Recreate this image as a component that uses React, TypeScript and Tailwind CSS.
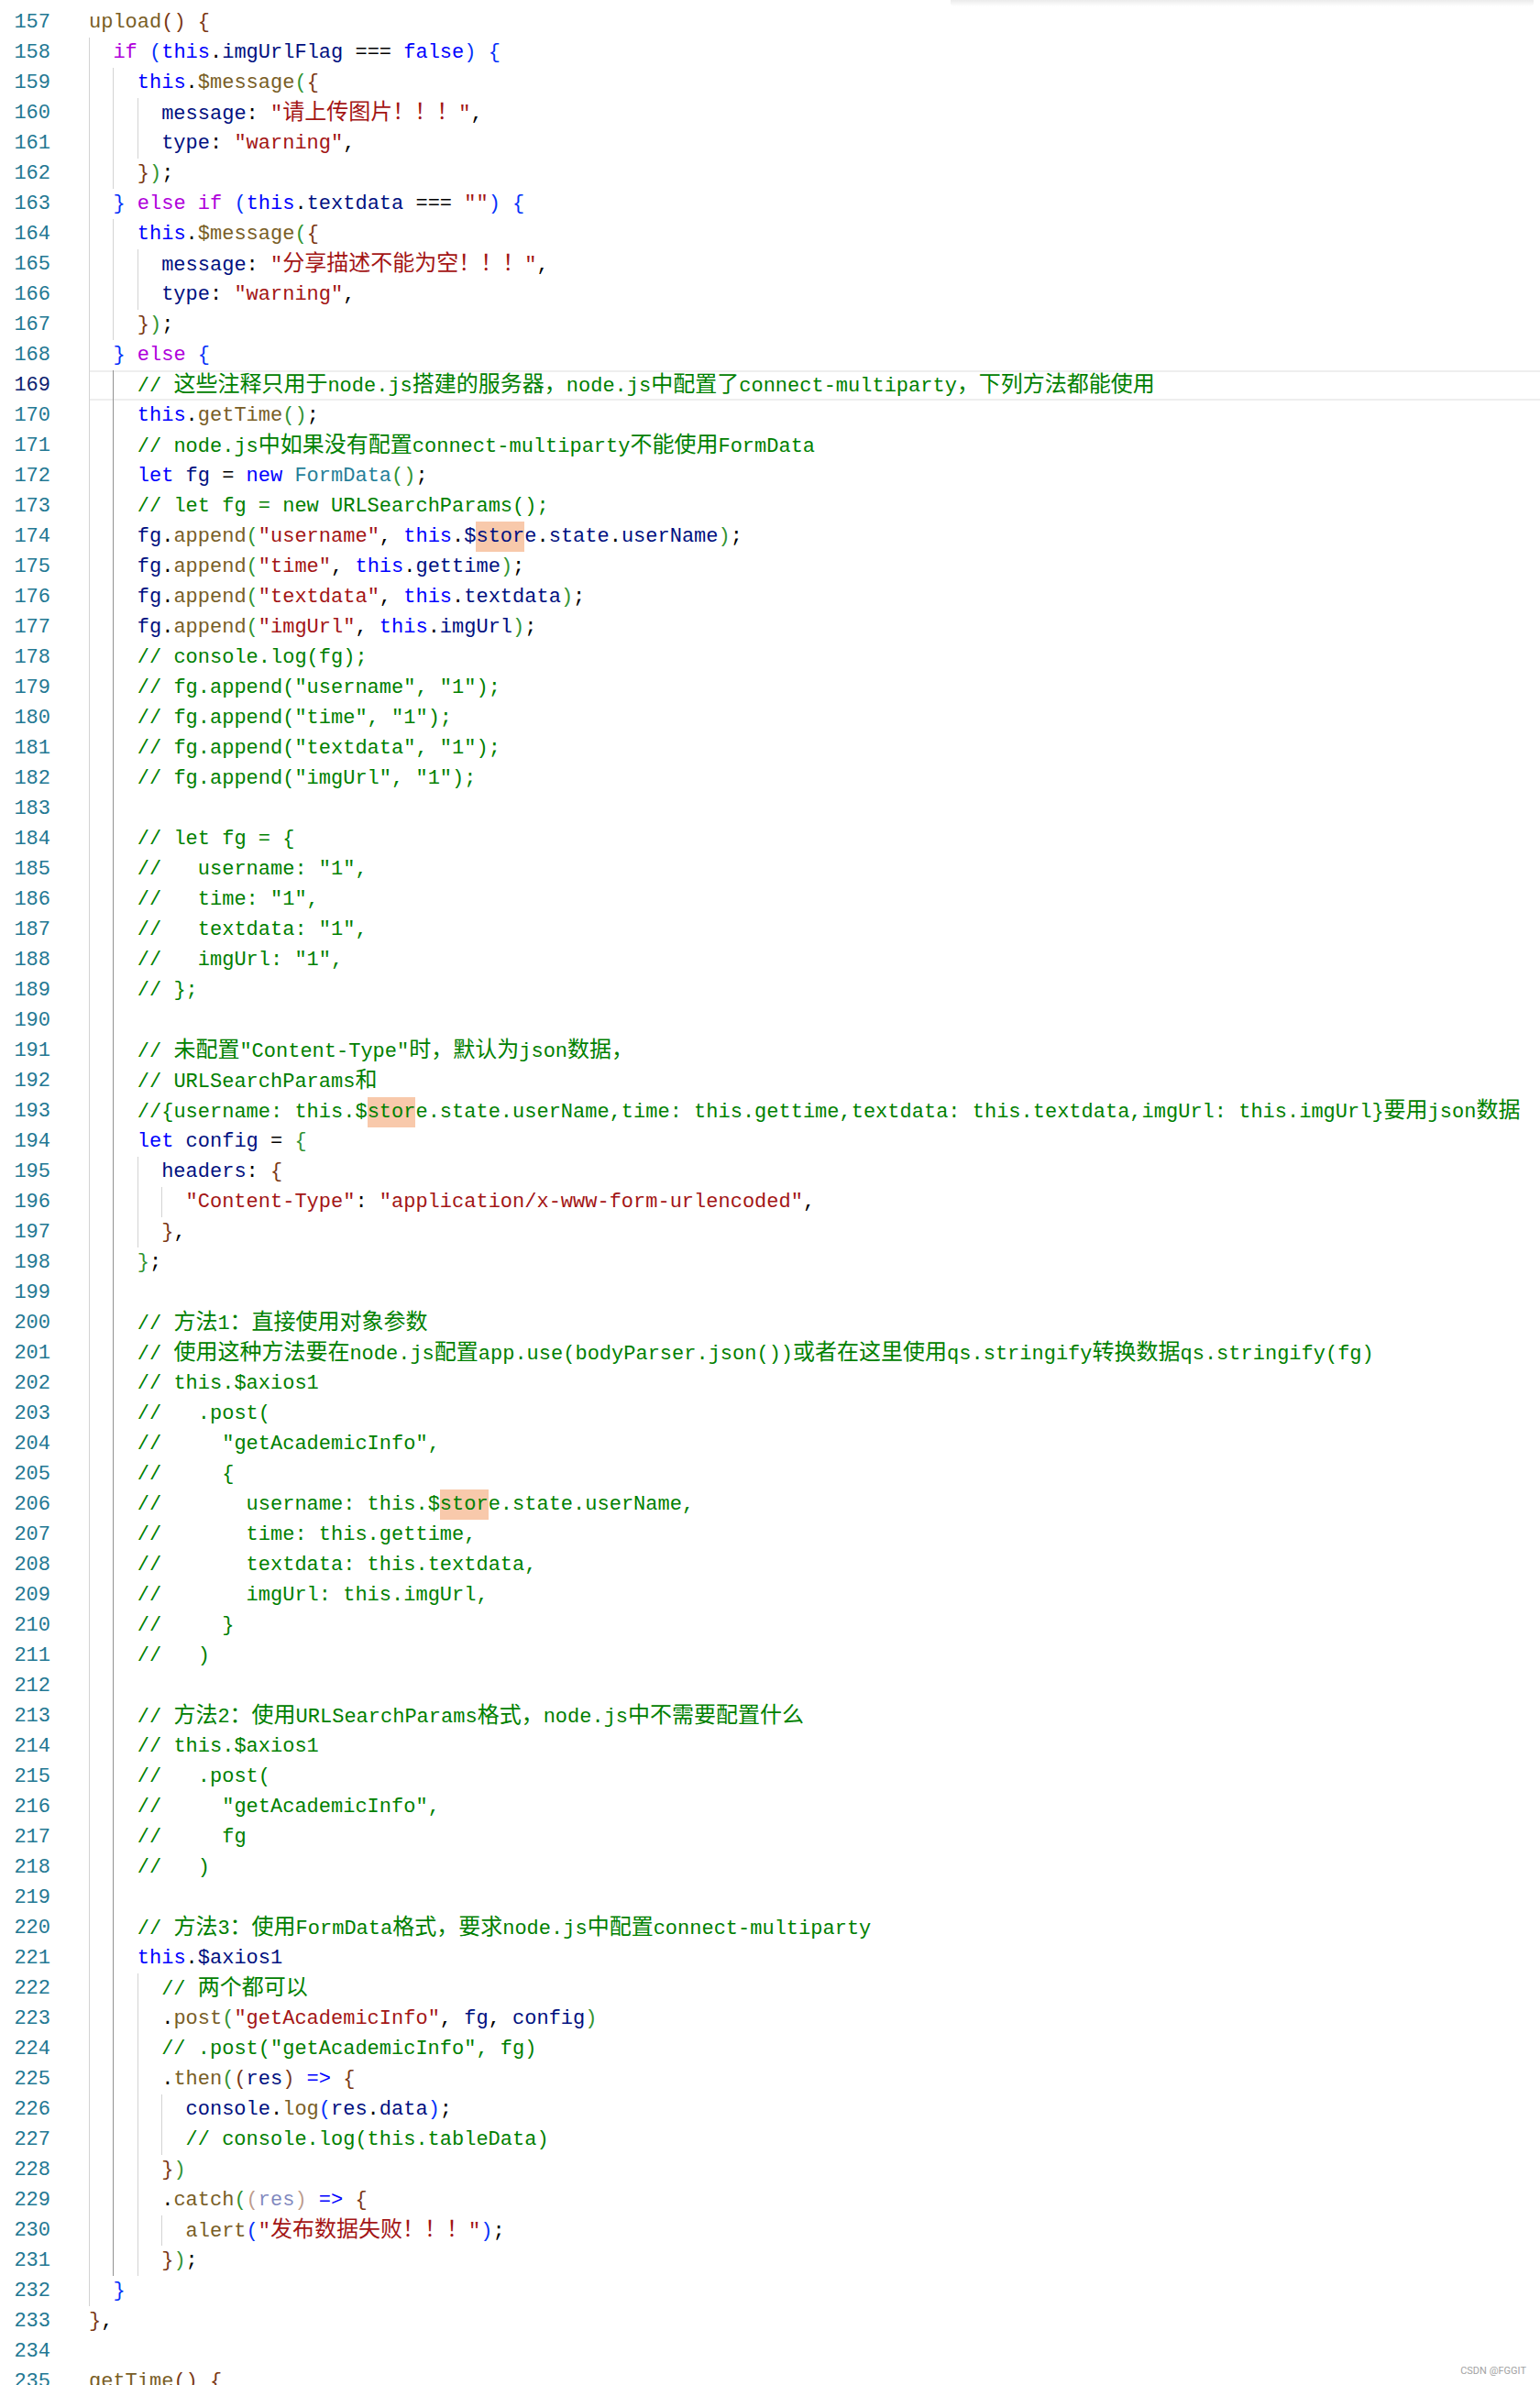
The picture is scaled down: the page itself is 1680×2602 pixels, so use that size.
import React from "react";

type Tok = [string, string];
type Line = { n: number; i: number; t: Tok[] };

// token colours, VS Code light+
const C: Record<string, string> = {
  k: "text-[#af00db]",
  b: "text-[#0000ff]",
  f: "text-[#795e26]",
  v: "text-[#001080]",
  s: "text-[#a31515]",
  m: "text-[#008000]",
  t: "text-[#267f99]",
  p: "text-[#000000]",
  x1: "text-[#0431fa]",
  x2: "text-[#319331]",
  x3: "text-[#7b3814]",
  vf: "text-[#001080]/50",
  x3f: "text-[#7b3814]/50",
  vh: "inline-block bg-[#f8c9ab] text-[#001080]",
  mh: "inline-block bg-[#f8c9ab] text-[#008000]",
};

const msg = (n: number): Line => ({
  n,
  i: 4,
  t: [["b", "this"], ["p", "."], ["f", "$message"], ["x2", "("], ["x3", "{"]],
});
const warn = (n: number): Line => ({
  n,
  i: 6,
  t: [["v", "type"], ["p", ": "], ["s", '"warning"'], ["p", ","]],
});
const close = (n: number): Line => ({ n, i: 4, t: [["x3", "}"], ["x2", ")"], ["p", ";"]] });
const com = (n: number, text: string, i = 4): Line => ({ n, i, t: [["m", text]] });
const blank = (n: number, i = 4): Line => ({ n, i, t: [] });
const append = (n: number, key: string, prop: string): Line => ({
  n,
  i: 4,
  t: [
    ["v", "fg"], ["p", "."], ["f", "append"], ["x2", "("], ["s", `"${key}"`], ["p", ", "],
    ["b", "this"], ["p", "."], ["v", prop], ["x2", ")"], ["p", ";"],
  ],
});

const lines: Line[] = [
  { n: 157, i: 0, t: [["f", "upload"], ["x3", "()"], ["p", " "], ["x3", "{"]] },
  {
    n: 158,
    i: 2,
    t: [
      ["k", "if"], ["p", " "], ["x1", "("], ["b", "this"], ["p", "."], ["v", "imgUrlFlag"],
      ["p", " === "], ["b", "false"], ["x1", ")"], ["p", " "], ["x1", "{"],
    ],
  },
  msg(159),
  { n: 160, i: 6, t: [["v", "message"], ["p", ": "], ["s", '"请上传图片！！！"'], ["p", ","]] },
  warn(161),
  close(162),
  {
    n: 163,
    i: 2,
    t: [
      ["x1", "}"], ["p", " "], ["k", "else if"], ["p", " "], ["x1", "("], ["b", "this"], ["p", "."],
      ["v", "textdata"], ["p", " === "], ["s", '""'], ["x1", ")"], ["p", " "], ["x1", "{"],
    ],
  },
  msg(164),
  { n: 165, i: 6, t: [["v", "message"], ["p", ": "], ["s", '"分享描述不能为空！！！"'], ["p", ","]] },
  warn(166),
  close(167),
  { n: 168, i: 2, t: [["x1", "}"], ["p", " "], ["k", "else"], ["p", " "], ["x1", "{"]] },
  com(169, "// 这些注释只用于node.js搭建的服务器，node.js中配置了connect-multiparty，下列方法都能使用"),
  { n: 170, i: 4, t: [["b", "this"], ["p", "."], ["f", "getTime"], ["x2", "()"], ["p", ";"]] },
  com(171, "// node.js中如果没有配置connect-multiparty不能使用FormData"),
  {
    n: 172,
    i: 4,
    t: [
      ["b", "let"], ["p", " "], ["v", "fg"], ["p", " = "], ["b", "new"], ["p", " "], ["t", "FormData"],
      ["x2", "()"], ["p", ";"],
    ],
  },
  com(173, "// let fg = new URLSearchParams();"),
  {
    n: 174,
    i: 4,
    t: [
      ["v", "fg"], ["p", "."], ["f", "append"], ["x2", "("], ["s", '"username"'], ["p", ", "],
      ["b", "this"], ["p", "."], ["v", "$"], ["vh", "stor"], ["v", "e"], ["p", "."], ["v", "state"],
      ["p", "."], ["v", "userName"], ["x2", ")"], ["p", ";"],
    ],
  },
  append(175, "time", "gettime"),
  append(176, "textdata", "textdata"),
  append(177, "imgUrl", "imgUrl"),
  com(178, "// console.log(fg);"),
  com(179, '// fg.append("username", "1");'),
  com(180, '// fg.append("time", "1");'),
  com(181, '// fg.append("textdata", "1");'),
  com(182, '// fg.append("imgUrl", "1");'),
  blank(183),
  com(184, "// let fg = {"),
  com(185, '//   username: "1",'),
  com(186, '//   time: "1",'),
  com(187, '//   textdata: "1",'),
  com(188, '//   imgUrl: "1",'),
  com(189, "// };"),
  blank(190),
  com(191, '// 未配置"Content-Type"时，默认为json数据，'),
  com(192, "// URLSearchParams和"),
  {
    n: 193,
    i: 4,
    t: [
      ["m", "//{username: this.$"],
      ["mh", "stor"],
      ["m", "e.state.userName,time: this.gettime,textdata: this.textdata,imgUrl: this.imgUrl}要用json数据"],
    ],
  },
  { n: 194, i: 4, t: [["b", "let"], ["p", " "], ["v", "config"], ["p", " = "], ["x2", "{"]] },
  { n: 195, i: 6, t: [["v", "headers"], ["p", ": "], ["x3", "{"]] },
  {
    n: 196,
    i: 8,
    t: [["s", '"Content-Type"'], ["p", ": "], ["s", '"application/x-www-form-urlencoded"'], ["p", ","]],
  },
  { n: 197, i: 6, t: [["x3", "}"], ["p", ","]] },
  { n: 198, i: 4, t: [["x2", "}"], ["p", ";"]] },
  blank(199),
  com(200, "// 方法1：直接使用对象参数"),
  com(201, "// 使用这种方法要在node.js配置app.use(bodyParser.json())或者在这里使用qs.stringify转换数据qs.stringify(fg)"),
  com(202, "// this.$axios1"),
  com(203, "//   .post("),
  com(204, '//     "getAcademicInfo",'),
  com(205, "//     {"),
  {
    n: 206,
    i: 4,
    t: [["m", "//       username: this.$"], ["mh", "stor"], ["m", "e.state.userName,"]],
  },
  com(207, "//       time: this.gettime,"),
  com(208, "//       textdata: this.textdata,"),
  com(209, "//       imgUrl: this.imgUrl,"),
  com(210, "//     }"),
  com(211, "//   )"),
  blank(212),
  com(213, "// 方法2：使用URLSearchParams格式，node.js中不需要配置什么"),
  com(214, "// this.$axios1"),
  com(215, "//   .post("),
  com(216, '//     "getAcademicInfo",'),
  com(217, "//     fg"),
  com(218, "//   )"),
  blank(219),
  com(220, "// 方法3：使用FormData格式，要求node.js中配置connect-multiparty"),
  { n: 221, i: 4, t: [["b", "this"], ["p", "."], ["v", "$axios1"]] },
  com(222, "// 两个都可以", 6),
  {
    n: 223,
    i: 6,
    t: [
      ["p", "."], ["f", "post"], ["x2", "("], ["s", '"getAcademicInfo"'], ["p", ", "], ["v", "fg"],
      ["p", ", "], ["v", "config"], ["x2", ")"],
    ],
  },
  com(224, '// .post("getAcademicInfo", fg)', 6),
  {
    n: 225,
    i: 6,
    t: [
      ["p", "."], ["f", "then"], ["x2", "("], ["x3", "("], ["v", "res"], ["x3", ")"], ["p", " "],
      ["b", "=>"], ["p", " "], ["x3", "{"],
    ],
  },
  {
    n: 226,
    i: 8,
    t: [
      ["v", "console"], ["p", "."], ["f", "log"], ["x1", "("], ["v", "res"], ["p", "."], ["v", "data"],
      ["x1", ")"], ["p", ";"],
    ],
  },
  com(227, "// console.log(this.tableData)", 8),
  { n: 228, i: 6, t: [["x3", "}"], ["x2", ")"]] },
  {
    n: 229,
    i: 6,
    t: [
      ["p", "."], ["f", "catch"], ["x2", "("], ["x3f", "("], ["vf", "res"], ["x3f", ")"], ["p", " "],
      ["b", "=>"], ["p", " "], ["x3", "{"],
    ],
  },
  {
    n: 230,
    i: 8,
    t: [["f", "alert"], ["x1", "("], ["s", '"发布数据失败！！！"'], ["x1", ")"], ["p", ";"]],
  },
  { n: 231, i: 6, t: [["x3", "}"], ["x2", ")"], ["p", ";"]] },
  { n: 232, i: 2, t: [["x1", "}"]] },
  { n: 233, i: 0, t: [["x3", "}"], ["p", ","]] },
  blank(234, 0),
  { n: 235, i: 0, t: [["f", "getTime"], ["x3", "()"], ["p", " "], ["x3", "{"]] },
];

const CJK = /([\u3000-\u303f\u4e00-\u9fff\uff00-\uffef]+)/;

function Text({ s }: { s: string }) {
  const parts = s.split(CJK);
  return (
    <>
      {parts.map((p, i) =>
        i % 2 === 1 ? (
          <span key={i} className="text-[24px]">
            {p}
          </span>
        ) : (
          p
        )
      )}
    </>
  );
}

function CodeLine({ line }: { line: Line }) {
  const current = line.n === 169;
  const guides = Array.from({ length: line.i / 2 }, (_, g) => g * 2);

  return (
    <div className="flex h-[33px] leading-[33px] whitespace-pre">
      <div
        className={`w-[55px] shrink-0 text-right ${
          current ? "text-[#0b216f]" : "text-[#237893]"
        }`}
      >
        {line.n}
      </div>
      <div
        className={`ml-[42px] flex-1 ${
          current ? "shadow-[inset_0_2px_0_#eeeeee,inset_0_-2px_0_#eeeeee]" : ""
        }`}
      >
        {guides.map((col) => (
          <span
            key={col}
            className={`inline-block w-[2ch] h-[33px] align-top border-l ${
              col === 2 && line.n >= 169 && line.n <= 231
                ? "border-[#939393]"
                : "border-[#d3d3d3]"
            }`}
          />
        ))}
        {line.t.map(([k, text], j) => (
          <span key={j} className={C[k]}>
            <Text s={text} />
          </span>
        ))}
      </div>
    </div>
  );
}

export default function App() {
  return (
    <div className="relative w-[1680px] h-[2602px] overflow-hidden bg-white pt-[8px] font-['Liberation_Mono','Noto_Sans_CJK_SC',monospace] text-[22px]">
      {/* shadow of the hidden find widget */}
      <div className="absolute top-0 left-[1037px] w-[636px] h-[7px] rounded-b bg-gradient-to-b from-[#ebebeb] to-white" />

      {lines.map((line) => (
        <CodeLine key={line.n} line={line} />
      ))}

      <div className="absolute top-[2580px] right-[15px] font-['Roboto',sans-serif] text-[11px] leading-[14px] text-[#a3a3a3]">
        CSDN @FGGIT
      </div>
    </div>
  );
}
